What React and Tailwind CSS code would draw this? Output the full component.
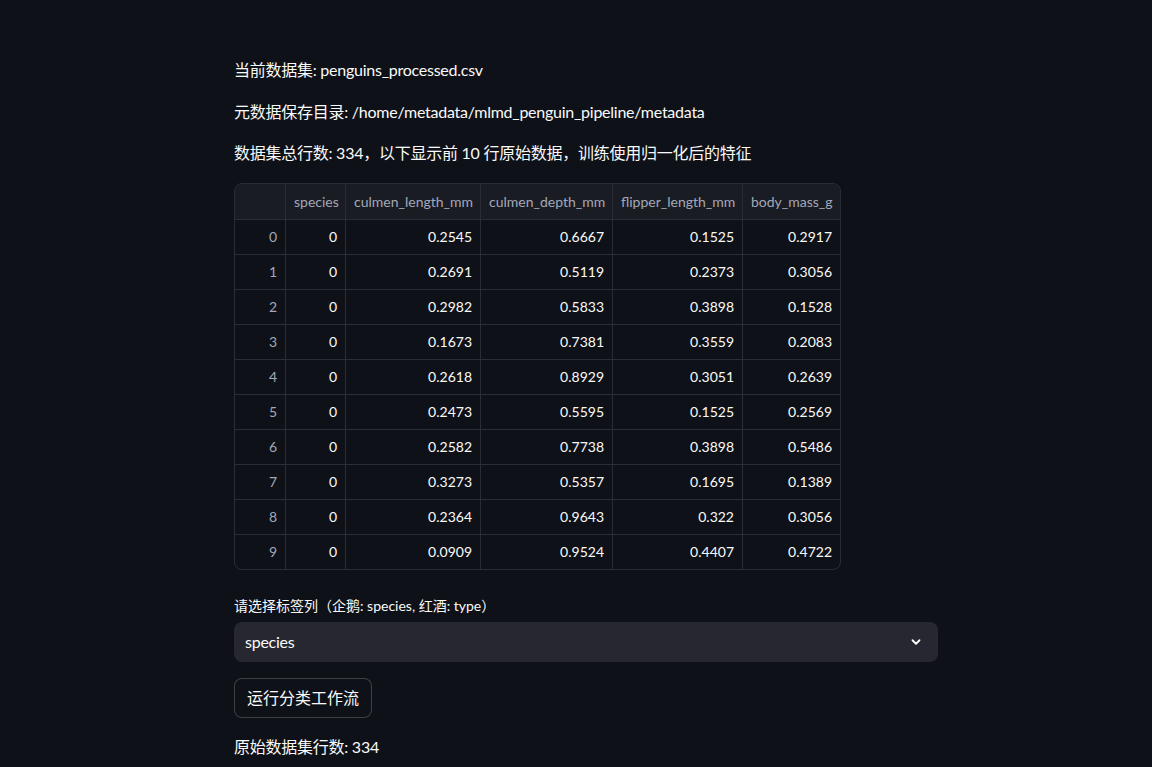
import React from "react";

const rows = [
  ["0", "0", "0.2545", "0.6667", "0.1525", "0.2917"],
  ["1", "0", "0.2691", "0.5119", "0.2373", "0.3056"],
  ["2", "0", "0.2982", "0.5833", "0.3898", "0.1528"],
  ["3", "0", "0.1673", "0.7381", "0.3559", "0.2083"],
  ["4", "0", "0.2618", "0.8929", "0.3051", "0.2639"],
  ["5", "0", "0.2473", "0.5595", "0.1525", "0.2569"],
  ["6", "0", "0.2582", "0.7738", "0.3898", "0.5486"],
  ["7", "0", "0.3273", "0.5357", "0.1695", "0.1389"],
  ["8", "0", "0.2364", "0.9643", "0.322", "0.3056"],
  ["9", "0", "0.0909", "0.9524", "0.4407", "0.4722"],
];

const headers = ["", "species", "culmen_length_mm", "culmen_depth_mm", "flipper_length_mm", "body_mass_g"];
const widths = ["w-[51px]", "w-[60px]", "w-[135px]", "w-[132px]", "w-[130px]", "w-[97px]"];

function Table() {
  return (
    <div className="w-[607px] rounded-lg border border-[#2b2d36] overflow-hidden text-[14px]">
      <div className="flex h-[35px] bg-[#1a1c24]">
        {headers.map((h, i) => (
          <div
            key={i}
            className={`${widths[i]} shrink-0 flex items-center px-2 whitespace-nowrap text-[#a3a8b8] ${i < 5 ? "border-r border-[#2b2d36]" : ""}`}
          >
            {h}
          </div>
        ))}
      </div>
      {rows.map((r, ri) => (
        <div key={ri} className="flex h-[35px] border-t border-[#2b2d36]">
          {r.map((c, i) => (
            <div
              key={i}
              className={`${widths[i]} shrink-0 flex items-center justify-end px-2 ${i === 0 ? "text-[#a3a8b8]" : "text-[#fafafa]"} ${i < 5 ? "border-r border-[#2b2d36]" : ""}`}
            >
              {c}
            </div>
          ))}
        </div>
      ))}
    </div>
  );
}

export default function App() {
  return (
    <div
      className="h-[767px] overflow-hidden bg-[#0e1117] text-[#fafafa]"
      style={{ fontFamily: '"Lato", "Noto Sans CJK SC", sans-serif' }}
    >
      <div className="pl-[234px] pt-[57px] w-[938px]">
        <div className="flex flex-col w-[704px]">
          <p className="text-[16px] leading-[25.6px] tracking-[-0.25px]">当前数据集: penguins_processed.csv</p>
          <p className="mt-4 text-[16px] leading-[25.6px] tracking-[-0.25px]">元数据保存目录: /home/metadata/mlmd_penguin_pipeline/metadata</p>
          <p className="mt-4 text-[16px] leading-[25.6px] tracking-[-0.25px]">数据集总行数: 334，以下显示前 10 行原始数据，训练使用归一化后的特征</p>
          <div className="mt-[17px]">
            <Table />
          </div>
          <label className="mt-[24px] mb-1 text-[14px] leading-[24px] h-[24px]">请选择标签列（企鹅: species, 红酒: type）</label>
          <div className="h-[40px] rounded-lg bg-[#262730] flex items-center justify-between pl-[11px] pr-[15px]">
            <span className="text-[16px] tracking-[-0.25px]">species</span>
            <svg width="14" height="14" viewBox="0 0 24 24" fill="none" stroke="#fafafa" strokeWidth="3.2" strokeLinecap="round" strokeLinejoin="round">
              <path d="M6 9l6 6 6-6" />
            </svg>
          </div>
          <div className="mt-4 flex">
            <button className="h-[40px] px-3 rounded-lg border border-[rgba(250,250,250,0.2)] bg-[#0e1117] text-[16px] text-[#fafafa]">
              运行分类工作流
            </button>
          </div>
          <p className="mt-4 text-[16px] leading-[25.6px] tracking-[-0.25px]">原始数据集行数: 334</p>
        </div>
      </div>
    </div>
  );
}
